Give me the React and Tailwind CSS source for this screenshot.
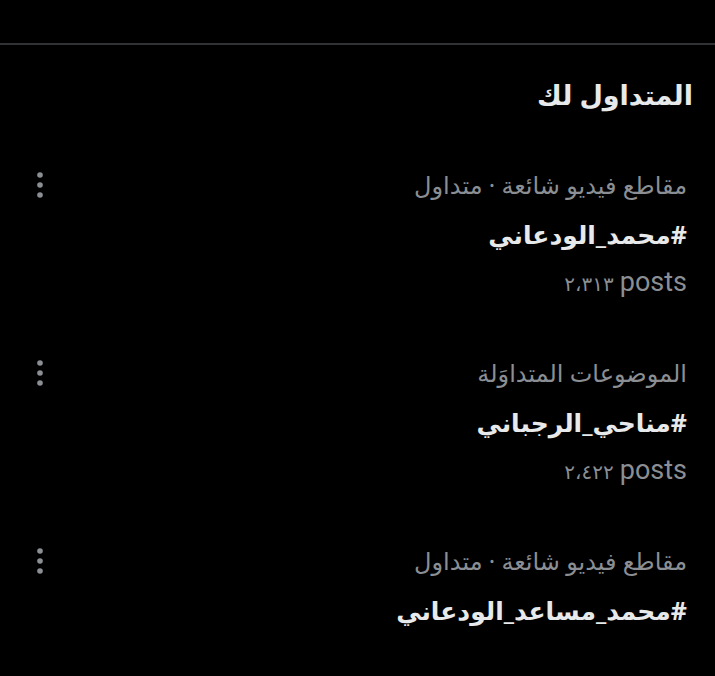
const trends = [
  { category: "مقاطع فيديو شائعة · متداول", tag: "#محمد_الودعاني", count: "٢،٣١٣" },
  { category: "الموضوعات المتداوَلة", tag: "#مناحي_الرجباني", count: "٢،٤٢٢" },
  { category: "مقاطع فيديو شائعة · متداول", tag: "#محمد_مساعد_الودعاني", count: null },
];

function Dots() {
  return (
    <svg width="10" height="30" viewBox="0 0 10 30" className="shrink-0 text-[#8b8f94]">
      <circle cx="5" cy="5" r="2.8" fill="currentColor" />
      <circle cx="5" cy="15" r="2.8" fill="currentColor" />
      <circle cx="5" cy="25" r="2.8" fill="currentColor" />
    </svg>
  );
}

function TrendRow({ item }) {
  return (
    <div className="flex justify-between items-start pl-[35px] pr-[28px] pt-[14px] pb-[47px]">
      <div className="flex flex-col">
        <span className="text-[24px] leading-[30px] text-[#8b8f94]">{item.category}</span>
        <span className="mt-[17px] text-[25px] leading-[34px] font-bold text-[#e7e9ea]">{item.tag}</span>
        {item.count && (
          <div dir="ltr" className="mt-[16px] flex justify-end items-baseline gap-[6px] h-[30px] text-[#8b8f94]">
            <span className="text-[20px] leading-[30px]">{item.count}</span>
            <span className="text-[27px] leading-[30px] font-['Roboto',sans-serif]">posts</span>
          </div>
        )}
      </div>
      <Dots />
    </div>
  );
}

export default function App() {
  return (
    <div
      dir="rtl"
      className="w-[715px] h-[676px] bg-black overflow-hidden"
      style={{ fontFamily: '"Noto Sans", "DejaVu Sans", sans-serif' }}
    >
      <div className="h-[45px] border-b-2 border-[#2f3336]" />
      {/* title */}
      <div className="pr-[22px] pt-[30px] pb-[41px]">
        <h2 className="text-[27px] leading-[40px] font-bold text-[#e7e9ea]">المتداول لك</h2>
      </div>
      {trends.map((t, i) => (
        <TrendRow key={i} item={t} />
      ))}
    </div>
  );
}
